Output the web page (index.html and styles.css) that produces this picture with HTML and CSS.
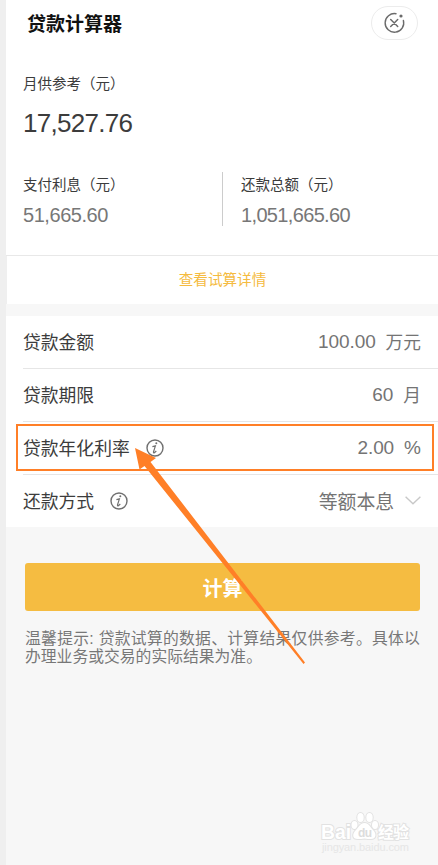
FILE: index.html
```html
<!DOCTYPE html>
<html lang="zh-CN">
<head>
    <meta charset="UTF-8">
    <title>贷款计算器</title>
    <meta name="viewport" content="width=device-width, initial-scale=1.0">
    <link rel="stylesheet" href="styles.css">
</head>
<body>
    <div class="page">
        <header class="header">
            <h1>贷款计算器</h1>
            <button class="close" type="button" aria-label="关闭">
                <svg width="22" height="22" viewBox="0 0 22 22" fill="none" stroke="#6b6b6b" stroke-width="1.4" stroke-linecap="round">
                    <path d="M12 1.700A9.300 9.300 0 1 0 19.400 8.400"/>
                    <path d="M6.700 7.500l7 7M13.700 7.500l-7 7" stroke-width="1.500"/>
                    <circle cx="17" cy="4" r="1.600" fill="#6b6b6b" stroke="none"/>
                </svg>
            </button>
        </header>

        <section class="summary">
            <div class="label">月供参考（元）</div>
            <div class="total">17,527.76</div>
            <div class="columns">
                <div class="column">
                    <div class="label">支付利息（元）</div>
                    <div class="amount">51,665.60</div>
                </div>
                <div class="column">
                    <div class="label">还款总额（元）</div>
                    <div class="amount amount-wide">1,051,665.60</div>
                </div>
            </div>
        </section>
        <a class="detail">查看试算详情</a>

        <form class="form">
            <div class="row">
                <span class="name">贷款金额</span>
                <span class="value">100.00</span>
                <span class="unit">万元</span>
            </div>
            <div class="row">
                <span class="name">贷款期限</span>
                <span class="value">60</span>
                <span class="unit">月</span>
            </div>
            <div class="row">
                <span class="name">贷款年化利率</span>
                <svg class="info" width="18" height="18" viewBox="0 0 18 18" fill="none" stroke="#707070" stroke-width="1.4">
                    <circle cx="9" cy="9" r="8"/>
                    <path d="M6.400 7.600l3-.7-1.900 6q-.2 1.300.9.800l1.900-1.700" stroke-width="1.200"/>
                    <circle cx="10.300" cy="4.200" r="1" fill="#707070" stroke="none"/>
                </svg>
                <span class="value">2.00</span>
                <span class="unit unit-percent">%</span>
            </div>
            <div class="row">
                <span class="name">还款方式</span>
                <svg class="info" width="18" height="18" viewBox="0 0 18 18" fill="none" stroke="#707070" stroke-width="1.4">
                    <circle cx="9" cy="9" r="8"/>
                    <path d="M6.400 7.600l3-.7-1.900 6q-.2 1.300.9.800l1.900-1.700" stroke-width="1.200"/>
                    <circle cx="10.300" cy="4.200" r="1" fill="#707070" stroke="none"/>
                </svg>
                <span class="value value-text">等额本息</span>
                <svg class="chevron" width="16" height="9" viewBox="0 0 16 9" fill="none" stroke="#c8c8c8" stroke-width="1.4">
                    <path d="M.6.8L8 7.800 15.400.8"/>
                </svg>
            </div>
        </form>

        <div class="actions">
            <button class="submit" type="button">计算</button>
            <p class="tip"><span class="tip-line tip-first">温馨提示: 贷款试算的数据、计算结果仅供参考。具体以</span><span class="tip-line">办理业务或交易的实际结果为准。</span></p>
        </div>
    </div>

    <!-- highlight and pointer -->
    <div class="highlight"></div>
    <svg class="arrow" width="438" height="865" viewBox="0 0 438 865">
        <path d="M135 448L156 458L150.500 462L305 662.500L303.500 664L144.500 466L139.500 469.500Z" fill="#ff7f27"/>
    </svg>

    <svg class="watermark" width="100" height="46" viewBox="0 0 100 46">
        <g fill="#fff" stroke="#e2e2e2" stroke-width="2" paint-order="stroke">
            <text class="wm-brand" x="1" y="29" textLength="30" lengthAdjust="spacingAndGlyphs">Bai</text>
            <ellipse cx="34.500" cy="15" rx="3" ry="4"/>
            <ellipse cx="40.500" cy="7.500" rx="3.200" ry="4.500"/>
            <ellipse cx="49.500" cy="7.500" rx="3.200" ry="4.500"/>
            <ellipse cx="55" cy="15" rx="3" ry="4"/>
            <path d="M44.500 13C49 13 50 17 53 20C57 24 56 29 51 29Q48 29 44.500 28.500Q41 29 38 29C32 29 32 24 36 20C39 17 40 13 44.500 13Z"/>
            <text class="wm-cn" x="58" y="27.500" textLength="31">经验</text>
        </g>
        <text class="wm-du" x="38" y="27" textLength="14">du</text>
        <text class="wm-url" x="2" y="41" textLength="87">jingyan.baidu.com</text>
    </svg>
</body>
</html>
```
FILE: styles.css
```css
* {
    box-sizing: border-box;
}
body {
    margin: 0;
    font-family: "Liberation Sans", "Noto Sans CJK SC", sans-serif;
    background: #f7f7f7;
    color: #3c3c3c;
    height: 865px;
    position: relative;
    overflow: hidden;
}
.page {
    height: 865px;
    border-left: 6px solid #efefef;
}
.header {
    height: 63px;
    padding: 6px 20px 0 21px;
    display: flex;
    justify-content: space-between;
    align-items: flex-start;
    background: #fff;
}
h1 {
    margin: 5px 0 0;
    font-size: 19px;
    line-height: 28px;
    font-weight: 700;
    color: #111;
}
.close {
    width: 47px;
    height: 34px;
    padding: 0;
    border: 1px solid #ececec;
    border-radius: 17px;
    background: #fff;
    display: flex;
    align-items: center;
    justify-content: center;
}
.summary {
    height: 193px;
    padding: 11px 0 0 17px;
    background: #fff;
    border-bottom: 1px solid #e8e8e8;
}
.label {
    font-size: 14.5px;
    line-height: 20px;
    white-space: nowrap;
}
.total {
    margin-top: 13px;
    font-size: 26px;
    line-height: 32px;
    letter-spacing: -0.7px;
}
.columns {
    display: flex;
    margin-top: 33px;
}
.column {
    width: 199px;
    height: 54px;
    padding-top: 3px;
}
.column + .column {
    padding-left: 18px;
    border-left: 1px solid #ccc;
}
.amount {
    margin-top: 8px;
    font-size: 20px;
    line-height: 24px;
    letter-spacing: -0.45px;
    color: #777;
}
.amount-wide {
    letter-spacing: -0.65px;
}
.detail {
    display: block;
    height: 48px;
    border-left: 1px solid #efefef;
    background: #fff;
    color: #f5bb40;
    font-size: 14.6px;
    line-height: 49px;
    text-align: center;
}
.form {
    margin-top: 12px;
    padding-left: 17px;
    background: #fff;
}
.row {
    height: 53px;
    padding-right: 17px;
    display: flex;
    align-items: center;
    border-bottom: 1px solid #e6e6e6;
}
.row:last-child {
    height: 52px;
    border-bottom: none;
}
.name {
    margin-bottom: 2px;
    font-size: 17.8px;
}
.info {
    margin-left: 16px;
}
.value {
    margin-left: auto;
    font-size: 19px;
    letter-spacing: -0.1px;
    color: #747474;
}
.unit {
    margin-bottom: 2px;
    margin-left: 10px;
    font-size: 17.7px;
    color: #747474;
}
.unit-percent {
    margin-bottom: 0;
    font-size: 19px;
}
.value-text {
    margin-bottom: 2px;
    font-size: 18.9px;
}
.chevron {
    margin-left: 11px;
    margin-bottom: 2px;
}
.actions {
    padding: 36px 18px 0 19px;
}
.submit {
    display: block;
    width: 100%;
    height: 48px;
    padding: 0;
    border: none;
    border-radius: 3px;
    background: #f5bc41;
    color: #fff;
    font-family: inherit;
    font-size: 20px;
    font-weight: 700;
}
.tip {
    margin: 19px 0 0;
    font-size: 15.8px;
    line-height: 18px;
    color: #777;
    white-space: nowrap;
}
.tip-line {
    display: block;
}
.tip-first {
    letter-spacing: 0.28px;
}
.highlight {
    position: absolute;
    left: 16px;
    top: 424px;
    width: 418px;
    height: 47px;
    border: 2px solid #ff7f27;
}
.arrow {
    position: absolute;
    left: 0;
    top: 0;
}
.watermark {
    position: absolute;
    left: 320px;
    top: 810px;
}
.wm-brand {
    font-size: 20px;
    font-weight: 700;
}
.wm-cn {
    font-size: 16px;
    font-weight: 700;
}
.wm-du {
    font-size: 12px;
    font-weight: 700;
    fill: #dcdcdc;
}
.wm-url {
    font-size: 11px;
    fill: #e6e6e6;
}
```
